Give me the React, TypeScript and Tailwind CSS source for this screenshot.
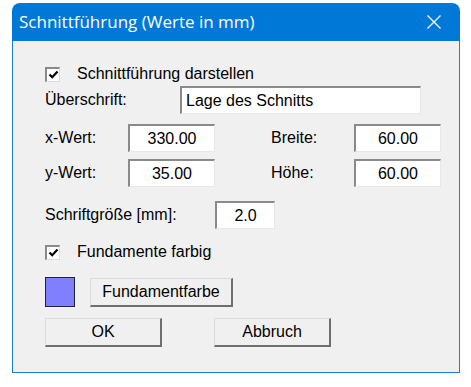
import React from 'react';

const font = { fontFamily: '"Liberation Sans", Arial, sans-serif' };

const Sunken: React.FC<{ className?: string; center?: boolean; children: React.ReactNode }> = ({ className = '', center, children }) => (
  <div className={`h-[28px] border-t-2 border-l-2 border-t-[#8a8a8a] border-l-[#8a8a8a] border-b border-r border-b-[#e8e8e8] border-r-[#e8e8e8] bg-white flex items-center text-[16px] text-black ${center ? 'justify-center' : 'pl-[4px]'} ${className}`}>
    {children}
  </div>
);

const Raised: React.FC<{ className?: string; children: React.ReactNode }> = ({ className = '', children }) => (
  <div className={`border-t border-l border-t-[#dcdcdc] border-l-[#dcdcdc] border-b-2 border-r-2 border-b-[#6e6e6e] border-r-[#6e6e6e] bg-[#f0f0f0] flex items-center justify-center text-[16px] text-black ${className}`}>
    {children}
  </div>
);

const Check: React.FC = () => (
  <div className="w-[15px] h-[15px] border-t-2 border-l-2 border-t-[#8a8a8a] border-l-[#8a8a8a] border-b border-r border-b-[#dcdcdc] border-r-[#dcdcdc] bg-white flex items-center justify-center">
    <svg width="11" height="11" viewBox="0 0 11 11">
      <path d="M1.5 5.5 L4.2 8.2 L9.5 2.5" fill="none" stroke="#000" strokeWidth="2.2" />
    </svg>
  </div>
);

export default function App() {
  return (
    <div className="w-[471px] h-[387px] bg-white pt-[3px] pl-[12px]" style={font}>
      <div className="w-[448px] flex flex-col">
        {/* title bar */}
        <div className="h-[38px] bg-[#0078d7] rounded-t-[8px] flex items-center justify-between pl-[7px] pr-[18px]">
          <span className="text-white text-[17px]" style={{ fontFamily: '"Open Sans", "Noto Sans", sans-serif' }}>
            Schnittführung (Werte in mm)
          </span>
          <svg width="16" height="16" viewBox="0 0 16 16">
            <path d="M1.5 1.5 L14.5 14.5 M14.5 1.5 L1.5 14.5" stroke="#fff" strokeWidth="1.3" fill="none" />
          </svg>
        </div>

        {/* client area */}
        <div className="h-[332px] bg-[#f0f0f0] border-l border-r border-b border-[#1a7fd8] pl-[32px] flex flex-col text-[16px] text-black">
          <div className="mt-[23px] h-[20px] flex items-center">
            <Check />
            <span className="ml-[17px]">Schnittführung darstellen</span>
          </div>

          <div className="mt-[2px] flex items-center">
            <span className="w-[135px]">Überschrift:</span>
            <Sunken className="w-[241px]">Lage des Schnitts</Sunken>
          </div>

          <div className="mt-[10px] flex items-center">
            <span className="w-[83px]">x-Wert:</span>
            <Sunken className="w-[87px]" center>330.00</Sunken>
            <span className="ml-[56px] w-[83px]">Breite:</span>
            <Sunken className="w-[87px]" center>60.00</Sunken>
          </div>

          <div className="mt-[7px] flex items-center">
            <span className="w-[83px]">y-Wert:</span>
            <Sunken className="w-[87px]" center>35.00</Sunken>
            <span className="ml-[56px] w-[83px]">Höhe:</span>
            <Sunken className="w-[87px]" center>60.00</Sunken>
          </div>

          <div className="mt-[14px] flex items-center">
            <span className="w-[170px]">Schriftgröße [mm]:</span>
            <Sunken className="w-[60px]" center>2.0</Sunken>
          </div>

          <div className="mt-[13px] h-[20px] flex items-center">
            <Check />
            <span className="ml-[17px]">Fundamente farbig</span>
          </div>

          <div className="mt-[15px] flex items-center">
            <div className="w-[30px] h-[30px] bg-[#8080ff] border border-[#202040]" />
            <Raised className="ml-[15px] w-[143px] h-[29px]">Fundamentfarbe</Raised>
          </div>

          <div className="mt-[11px] flex items-center">
            <Raised className="w-[117px] h-[29px]">OK</Raised>
            <Raised className="ml-[52px] w-[117px] h-[29px]">Abbruch</Raised>
          </div>
        </div>
      </div>
    </div>
  );
}
